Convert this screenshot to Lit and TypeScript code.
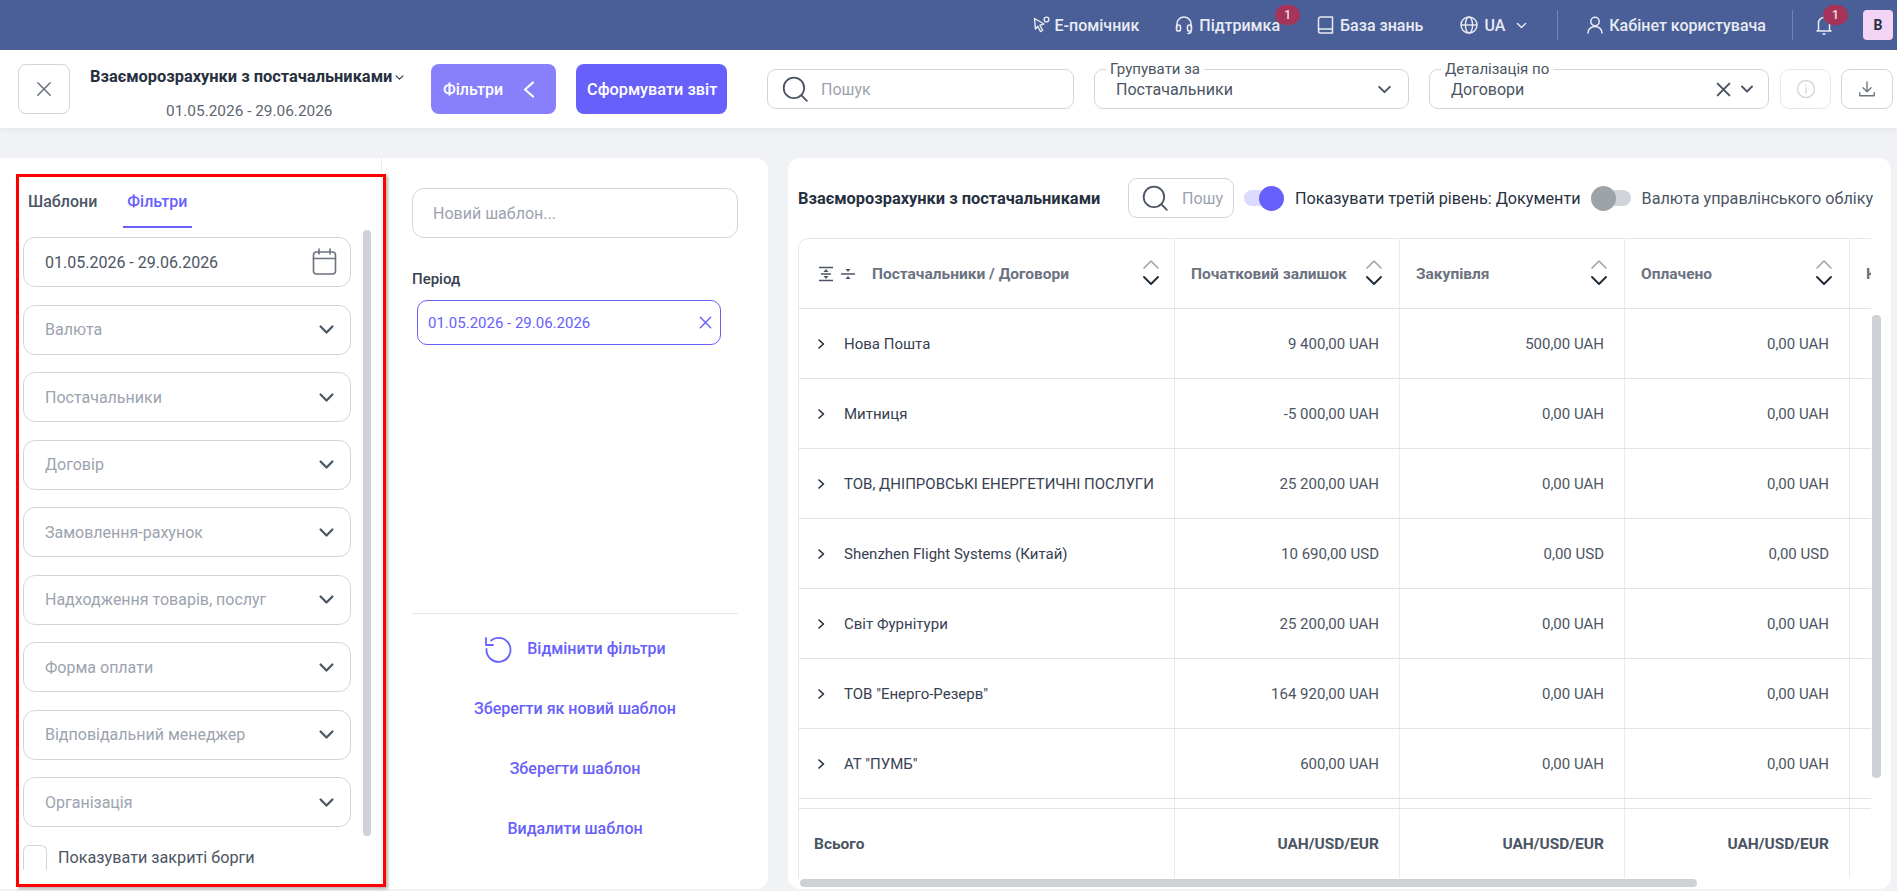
import { LitElement, css, html, svg } from "lit";
import { customElement } from "lit/decorators.js";

const chevronDown = (size = 16, w = 2) => html`<svg width=${size} height=${size} viewBox="0 0 16 16" fill="none" stroke="currentColor" stroke-width=${w} stroke-linecap="round" stroke-linejoin="round"><path d="M3 5.5 8 10.5 13 5.5"></path></svg>`;
const cross = (size = 16, w = 1.6) => html`<svg width=${size} height=${size} viewBox="0 0 16 16" fill="none" stroke="currentColor" stroke-width=${w} stroke-linecap="round"><path d="M2.5 2.5 13.5 13.5M13.5 2.5 2.5 13.5"></path></svg>`;
const searchIcon = html`<svg width="28" height="28" viewBox="0 0 26 26" fill="none" stroke="#4b5563" stroke-width="1.7" stroke-linecap="round"><circle cx="12" cy="12" r="9.5"></circle><path d="M19 19 24 24"></path></svg>`;
const sortIcon = svg`<svg class="sort" width="18" height="32" viewBox="0 0 18 32" fill="none" stroke-width="1.6" stroke-linecap="round" stroke-linejoin="round"><path d="M2 10 9 3 16 10" stroke="#9ca3af"></path><path d="M2 19 9 26 16 19" stroke="#1f2c3d" stroke-width="1.9"></path></svg>`;
const rowChevron = html`<svg width="10" height="12" viewBox="0 0 10 12" fill="none" stroke="#1f2c3d" stroke-width="1.6" stroke-linecap="round" stroke-linejoin="round"><path d="M3 2 7.5 6 3 10"></path></svg>`;

const FILTER_FIELDS = [
  "Валюта",
  "Постачальники",
  "Договір",
  "Замовлення-рахунок",
  "Надходження товарів, послуг",
  "Форма оплати",
  "Відповідальний менеджер",
  "Організація",
];

const ROWS: [string, string, string, string][] = [
  ["Нова Пошта", "9 400,00 UAH", "500,00 UAH", "0,00 UAH"],
  ["Митниця", "-5 000,00 UAH", "0,00 UAH", "0,00 UAH"],
  ["ТОВ, ДНІПРОВСЬКІ ЕНЕРГЕТИЧНІ ПОСЛУГИ", "25 200,00 UAH", "0,00 UAH", "0,00 UAH"],
  ["Shenzhen Flight Systems (Китай)", "10 690,00 USD", "0,00 USD", "0,00 USD"],
  ["Світ Фурнітури", "25 200,00 UAH", "0,00 UAH", "0,00 UAH"],
  ['ТОВ "Енерго-Резерв"', "164 920,00 UAH", "0,00 UAH", "0,00 UAH"],
  ['АТ "ПУМБ"', "600,00 UAH", "0,00 UAH", "0,00 UAH"],
];

@customElement("app-root")
export class AppRoot extends LitElement {
  static styles = css`
    :host {
      display: block;
      position: relative;
      height: 891px;
      overflow: hidden;
      background: #f0f2f5;
      font-family: Roboto, "Noto Sans", sans-serif;
      color: #374151;
    }
    * { box-sizing: border-box; }
    svg { display: block; flex: none; }

    .topbar {
      height: 50px;
      background: #4a5f97;
      color: #e8ebf3;
      display: flex;
      justify-content: flex-end;
      align-items: center;
      padding-right: 4px;
      font-size: 16px;
      font-weight: 500;
    }
    .top-item { display: flex; align-items: center; gap: 6px; height: 20px; position: relative; white-space: nowrap; }
    .top-assist { gap: 4px; margin-right: 36px; }
    .top-support { margin-right: 37px; }
    .top-base { margin-right: 37px; }
    .top-bell { margin-right: 30px; }
    .badge {
      position: absolute;
      top: -10px;
      width: 25px;
      height: 20px;
      border-radius: 10px;
      background: #a63358;
      color: #f3e3e8;
      font-size: 12px;
      display: flex;
      align-items: center;
      justify-content: center;
    }
    .badge-support { left: 100px; }
    .badge-bell { left: 8px; }
    .lang-caret { margin-left: 4px; }
    .top-sep { width: 1px; height: 30px; background: #7484ad; }
    .sep-lang { margin: 0 29px; }
    .sep-user { margin: 0 22px 0 26px; }
    .avatar {
      width: 30px;
      height: 30px;
      border-radius: 4px;
      background: #f3d4f5;
      color: #27303f;
      display: flex;
      align-items: center;
      justify-content: center;
      font-size: 14px;
      font-weight: 700;
    }

    .toolbar {
      height: 78px;
      background: #fff;
      display: flex;
      align-items: center;
      padding-left: 18px;
      box-shadow: 0 2px 6px rgb(0 0 0 / 0.05);
      position: relative;
    }
    .close-btn {
      width: 52px;
      height: 50px;
      border: 1px solid #d1d5db;
      border-radius: 8px;
      display: flex;
      align-items: center;
      justify-content: center;
      color: #6b7280;
    }
    .report-title { width: 361px; padding-left: 20px; align-self: flex-start; padding-top: 17px; }
    .report-name { display: flex; align-items: center; font-size: 16.4px; font-weight: 700; color: #27303f; line-height: 20px; white-space: nowrap; gap: 2px; }
    .report-date { font-size: 15.4px; line-height: 20px; color: #5f6672; margin-top: 14px; padding-left: 76px; }
    .btn {
      height: 50px;
      border-radius: 8px;
      color: #fff;
      font-size: 16px;
      font-weight: 500;
      display: flex;
      align-items: center;
      background: #6860fb;
      white-space: nowrap;
    }
    .btn-filters { width: 125px; background: #8880fb; padding-left: 12px; gap: 20px; }
    .btn-report { width: 151px; margin-left: 20px; padding-left: 11px; font-size: 16.3px; }
    .field {
      height: 40px;
      border: 1px solid #d1d5db;
      border-radius: 9px;
      display: flex;
      align-items: center;
      background: #fff;
      position: relative;
      font-size: 16px;
      color: #4b5563;
    }
    .tool-search { width: 307px; margin-left: 40px; padding-left: 13px; gap: 12px; color: #9ca3af; }
    .tool-group { width: 315px; margin-left: 20px; padding: 0 15px 0 21px; justify-content: space-between; }
    .tool-detail { width: 340px; margin-left: 20px; padding: 0 13px 0 21px; }
    .detail-value { flex: 1; }
    .detail-clear { margin-right: 7px; }
    .legend {
      position: absolute;
      top: -9px;
      left: 11px;
      background: #fff;
      padding: 0 4px;
      font-size: 15px;
      line-height: 16px;
      color: #4b5563;
    }
    .icon-btn {
      width: 51px;
      height: 40px;
      border: 1px solid #d1d5db;
      border-radius: 9px;
      display: flex;
      align-items: center;
      justify-content: center;
      color: #6b7280;
    }
    .icon-btn.info { margin-left: 11px; border-color: #e5e7eb; color: #d1d5db; }
    .icon-btn.down { margin-left: 10px; width: 52px; }

    .main { display: flex; gap: 20px; padding: 30px 6px 0 0; }
    .panel { height: 731px; background: #fff; }
    .filters-panel { width: 768px; display: flex; border-radius: 0 12px 12px 0; }
    .filters-col { width: 382px; border-right: 1px solid #e9ebee; padding: 34px 0 0 23px; position: relative; }
    .tabs { display: flex; padding-left: 5px; gap: 26px; font-size: 16px; line-height: 20px; }
    .tab { padding-bottom: 14px; font-weight: 500; color: #4b5563; }
    .tab.on { color: #6860fb; border-bottom: 2px solid #6860fb; padding: 0 5px 14px 4px; }
    .fields { display: flex; flex-direction: column; gap: 17.5px; margin-top: 9px; width: 328px; }
    .filter-field {
      height: 50px;
      border: 1px solid #d1d5db;
      border-radius: 12px;
      display: flex;
      align-items: center;
      justify-content: space-between;
      padding: 0 14px 0 21px;
      color: #9ca3af;
      font-size: 16px;
    }
    .filter-field svg { color: #4b5563; }
    .filter-field.date { color: #4b5563; padding-right: 13px; }
    .closed { display: flex; align-items: center; gap: 11px; margin-top: 18px; height: 24px; font-size: 16.2px; color: #4b5563; }
    .checkbox { width: 24px; height: 25px; border: 1px solid #d1d5db; border-bottom: 0; border-radius: 6px 6px 0 0; }
    .thumb { position: absolute; background: #ced2d7; border-radius: 4px; }
    .filters-thumb { left: 363px; top: 72px; width: 8px; height: 606px; }

    .template-col { flex: 1; padding: 30px 30px 0; display: flex; flex-direction: column; }
    .template-input {
      height: 50px;
      border: 1px solid #d1d5db;
      border-radius: 12px;
      display: flex;
      align-items: center;
      padding-left: 20px;
      color: #9ca3af;
      font-size: 16px;
    }
    .period-label { margin-top: 31px; font-size: 15px; font-weight: 500; color: #374151; line-height: 20px; }
    .chip {
      margin: 11px 0 0 5px;
      width: 304px;
      height: 45px;
      border: 1px solid #6860fb;
      border-radius: 10px;
      display: flex;
      align-items: center;
      justify-content: space-between;
      padding: 0 7px 0 10px;
      color: #6860fb;
      font-size: 15px;
    }
    .actions { margin-top: 268px; border-top: 1px solid #e5e7eb; display: flex; flex-direction: column; align-items: center; color: #6860fb; font-size: 16px; font-weight: 500; }
    .action { height: 60px; display: flex; align-items: center; justify-content: center; gap: 15px; }
    .action.first { height: 35px; margin-top: 17px; margin-bottom: 12px; }

    .report-panel { width: 1103px; border-radius: 12px; padding: 20px 0 0 10px; position: relative; overflow: hidden; }
    .report-head { display: flex; align-items: center; height: 40px; white-space: nowrap; }
    .report-head h2 { margin: 0; font-size: 16.4px; font-weight: 700; color: #27303f; width: 330px; }
    .head-search {
      width: 106px;
      height: 40px;
      border: 1px solid #d1d5db;
      border-radius: 9px;
      display: flex;
      align-items: center;
      padding: 0 10px 0 12px;
      gap: 13px;
      color: #9ca3af;
      font-size: 16px;
    }
    .head-search span { overflow: hidden; min-width: 0; }
    .toggle { display: flex; align-items: center; gap: 11px; font-size: 16.2px; }
    .toggle .track { width: 40px; height: 16px; border-radius: 8px; position: relative; }
    .toggle .knob { position: absolute; top: -4.5px; width: 25px; height: 25px; border-radius: 50%; }
    .toggle.on { margin-left: 10px; color: #27303f; }
    .toggle.on .track { background: #dcdafd; }
    .toggle.on .knob { right: 0; background: #6860fb; }
    .toggle.off { margin-left: 10px; color: #4b5563; }
    .toggle.off .track { background: #d1d5db; }
    .toggle.off .knob { left: 0; background: #9ca3a9; }

    .table { margin-top: 20px; width: 1073px; border-top: 1px solid #e5e7eb; border-left: 1px solid #e5e7eb; border-radius: 10px 0 0 0; overflow: hidden; font-size: 15px; }
    .row {
      display: grid;
      grid-template-columns: 376px 225px 225px 225px 225px;
      height: 70px;
      border-bottom: 1px solid #e2e4e8;
    }
    .cell { border-right: 1px solid #e9ebee; display: flex; align-items: center; justify-content: flex-end; padding: 0 20px; white-space: nowrap; color: #4b5563; overflow: hidden; }
    .cell.name { justify-content: flex-start; gap: 18px; padding-left: 17px; color: #374151; }
    .head .cell { justify-content: space-between; font-size: 15.5px; font-weight: 700; color: #6b7280; padding: 0 16px; }
    .head .cell.name { padding: 0 14px 0 20px; gap: 0; }
    .head-left { display: flex; align-items: center; gap: 12px; }
    .collapse { display: flex; gap: 8px; margin-right: 5px; }
    .spacer { height: 10px; }
    .total { border-bottom: 0; height: 69px; }
    .total .cell { font-weight: 700; color: #4b5563; font-size: 15.5px; }
    .total .cell.name { padding-left: 15px; }
    .v-thumb { left: 1084px; top: 157px; width: 9px; height: 463px; }
    .h-thumb { left: 12px; top: 721px; width: 897px; height: 8px; }

    .annotation {
      position: absolute;
      left: 16px;
      top: 174px;
      width: 370px;
      height: 713px;
      border: 3px solid #f00;
      box-shadow: 2px 2px 3px rgb(0 0 0 / 0.3);
      pointer-events: none;
    }
  `;

  private renderTopbar() {
    return html`
      <div class="topbar">
        <div class="top-item top-assist">
          <svg width="18" height="20" viewBox="0 0 18 20" fill="none" stroke="currentColor" stroke-width="1.4" stroke-linejoin="round"><path d="M1.5 3.5 11 9l-4 1.2 2.6 5.2-2.2 1.1L4.8 11.3 2.5 14Z"></path><circle cx="13.5" cy="4.5" r="2.4"></circle></svg>
          Е-помічник
        </div>
        <div class="top-item top-support">
          <svg width="18" height="20" viewBox="0 0 18 20" fill="none" stroke="currentColor" stroke-width="1.6" stroke-linecap="round"><path d="M2 12V9a7 7 0 0 1 14 0v3"></path><rect x="1.5" y="10" width="4" height="6" rx="1.8"></rect><rect x="12.5" y="10" width="4" height="6" rx="1.8"></rect><path d="M16 16c0 1.5-1 2.5-3 2.5"></path></svg>
          Підтримка
          <span class="badge badge-support">1</span>
        </div>
        <div class="top-item top-base">
          <svg width="17" height="18" viewBox="0 0 17 18" fill="none" stroke="currentColor" stroke-width="1.5" stroke-linejoin="round"><path d="M1.5 14V3a2 2 0 0 1 2-2h12v12H3.5a2 2 0 0 0 0 4h12v-4"></path></svg>
          База знань
        </div>
        <div class="top-item">
          <svg width="18" height="18" viewBox="0 0 18 18" fill="none" stroke="currentColor" stroke-width="1.4"><circle cx="9" cy="9" r="8"></circle><ellipse cx="9" cy="9" rx="3.6" ry="8"></ellipse><path d="M1 9h16"></path></svg>
          UA
          <span class="lang-caret">${chevronDown(13, 1.7)}</span>
        </div>
        <span class="top-sep sep-lang"></span>
        <div class="top-item">
          <svg width="16" height="18" viewBox="0 0 16 18" fill="none" stroke="currentColor" stroke-width="1.5" stroke-linecap="round"><circle cx="8" cy="5.5" r="4.2"></circle><path d="M1 17c0-3.8 3-6.5 7-6.5s7 2.7 7 6.5"></path></svg>
          Кабінет користувача
        </div>
        <span class="top-sep sep-user"></span>
        <div class="top-item top-bell">
          <svg width="18" height="20" viewBox="0 0 18 20" fill="none" stroke="currentColor" stroke-width="1.5" stroke-linecap="round" stroke-linejoin="round"><path d="M3.5 15V8a5.5 5.5 0 0 1 11 0v7l1.5 1H2Z"></path><path d="M8 19h2"></path></svg>
          <span class="badge badge-bell">1</span>
        </div>
        <div class="avatar">В</div>
      </div>
    `;
  }

  private renderToolbar() {
    return html`
      <div class="toolbar">
        <div class="close-btn">${cross(18, 1.4)}</div>
        <div class="report-title">
          <div class="report-name">Взаєморозрахунки з постачальниками ${chevronDown(11, 1.5)}</div>
          <div class="report-date">01.05.2026 - 29.06.2026</div>
        </div>
        <div class="btn btn-filters">
          Фільтри
          <svg width="12" height="17" viewBox="0 0 12 17" fill="none" stroke="currentColor" stroke-width="2.2" stroke-linecap="round" stroke-linejoin="round"><path d="M10 1.5 2 8.5 10 15.5"></path></svg>
        </div>
        <div class="btn btn-report">Сформувати звіт</div>
        <div class="field tool-search">${searchIcon}<span>Пошук</span></div>
        <div class="field tool-group">
          <span class="legend">Групувати за</span>
          <span>Постачальники</span>
          ${chevronDown(17, 1.9)}
        </div>
        <div class="field tool-detail">
          <span class="legend">Деталізація по</span>
          <span class="detail-value">Договори</span>
          <span class="detail-clear">${cross(17, 1.9)}</span>
          ${chevronDown(16, 1.9)}
        </div>
        <div class="icon-btn info">
          <svg width="20" height="20" viewBox="0 0 20 20" fill="none" stroke="currentColor" stroke-width="1.4" stroke-linecap="round"><circle cx="10" cy="10" r="8.5"></circle><path d="M10 9v5M10 6v.5"></path></svg>
        </div>
        <div class="icon-btn down">
          <svg width="18" height="18" viewBox="0 0 20 20" fill="none" stroke="currentColor" stroke-width="1.5" stroke-linecap="round" stroke-linejoin="round"><path d="M10 2v11M5.5 8.5 10 13l4.5-4.5M2 14v3.5h16V14"></path></svg>
        </div>
      </div>
    `;
  }

  private renderFilters() {
    return html`
      <section class="panel filters-panel">
        <div class="filters-col">
          <div class="tabs">
            <div class="tab">Шаблони</div>
            <div class="tab on">Фільтри</div>
          </div>
          <div class="fields">
            <div class="filter-field date">
              01.05.2026 - 29.06.2026
              <svg width="25" height="28" viewBox="0 0 25 28" fill="none" stroke="#6b7280" stroke-width="1.6" stroke-linecap="round"><rect x="1.5" y="4" width="22" height="22" rx="3"></rect><path d="M1.5 10.5h22M7 1v5M18 1v5"></path></svg>
            </div>
            ${FILTER_FIELDS.map(
              (f) => html`<div class="filter-field">${f} ${chevronDown(19, 1.9)}</div>`
            )}
          </div>
          <div class="closed"><span class="checkbox"></span>Показувати закриті борги</div>
          <span class="thumb filters-thumb"></span>
        </div>
        <div class="template-col">
          <div class="template-input">Новий шаблон...</div>
          <div class="period-label">Період</div>
          <div class="chip">01.05.2026 - 29.06.2026 <span>${cross(15, 1.5)}</span></div>
          <div class="actions">
            <div class="action first">
              <svg width="28" height="28" viewBox="0 0 28 28" fill="none" stroke="currentColor" stroke-width="1.8" stroke-linecap="round" stroke-linejoin="round"><path d="M7 5.5a12 12 0 1 1-4.5 8.5"></path><path d="M2 3v7h7"></path></svg>
              Відмінити фільтри
            </div>
            <div class="action">Зберегти як новий шаблон</div>
            <div class="action">Зберегти шаблон</div>
            <div class="action">Видалити шаблон</div>
          </div>
        </div>
      </section>
    `;
  }

  private renderReport() {
    return html`
      <section class="panel report-panel">
        <div class="report-head">
          <h2>Взаєморозрахунки з постачальниками</h2>
          <div class="head-search">${searchIcon}<span>Пошук</span></div>
          <div class="toggle on"><span class="track"><span class="knob"></span></span>Показувати третій рівень: Документи</div>
          <div class="toggle off"><span class="track"><span class="knob"></span></span>Валюта управлінського обліку</div>
        </div>
        <div class="table">
          <div class="row head">
            <div class="cell name">
              <span class="head-left">
                <span class="collapse">
                  <svg width="14" height="16" viewBox="0 0 14 16" fill="none" stroke="#4b5563" stroke-width="1.5"><path d="M0 1.5h14M0 14.5h14M2 8h10"></path><path d="M7 3 4.5 6h5ZM7 13 4.5 10h5Z" fill="#4b5563" stroke="none"></path></svg>
                  <svg width="14" height="16" viewBox="0 0 14 16" fill="none" stroke="#4b5563" stroke-width="1.5"><path d="M0 8h14"></path><path d="M7 6 4.5 3h5ZM7 10 4.5 13h5Z" fill="#4b5563" stroke="none"></path></svg>
                </span>
                Постачальники / Договори
              </span>
              ${sortIcon}
            </div>
            <div class="cell">Початковий залишок ${sortIcon}</div>
            <div class="cell">Закупівля ${sortIcon}</div>
            <div class="cell">Оплачено ${sortIcon}</div>
            <div class="cell">Кінцевий залишок</div>
          </div>
          ${ROWS.map(
            (r) => html`
              <div class="row">
                <div class="cell name">${rowChevron}<span>${r[0]}</span></div>
                <div class="cell">${r[1]}</div>
                <div class="cell">${r[2]}</div>
                <div class="cell">${r[3]}</div>
                <div class="cell"></div>
              </div>
            `
          )}
          <div class="row spacer">
            <div class="cell"></div><div class="cell"></div><div class="cell"></div><div class="cell"></div><div class="cell"></div>
          </div>
          <div class="row total">
            <div class="cell name">Всього</div>
            <div class="cell">UAH/USD/EUR</div>
            <div class="cell">UAH/USD/EUR</div>
            <div class="cell">UAH/USD/EUR</div>
            <div class="cell"></div>
          </div>
        </div>
        <span class="thumb v-thumb"></span>
        <span class="thumb h-thumb"></span>
      </section>
    `;
  }

  render() {
    return html`
      ${this.renderTopbar()} ${this.renderToolbar()}
      <div class="main">${this.renderFilters()} ${this.renderReport()}</div>
      <div class="annotation"></div>
    `;
  }
}
